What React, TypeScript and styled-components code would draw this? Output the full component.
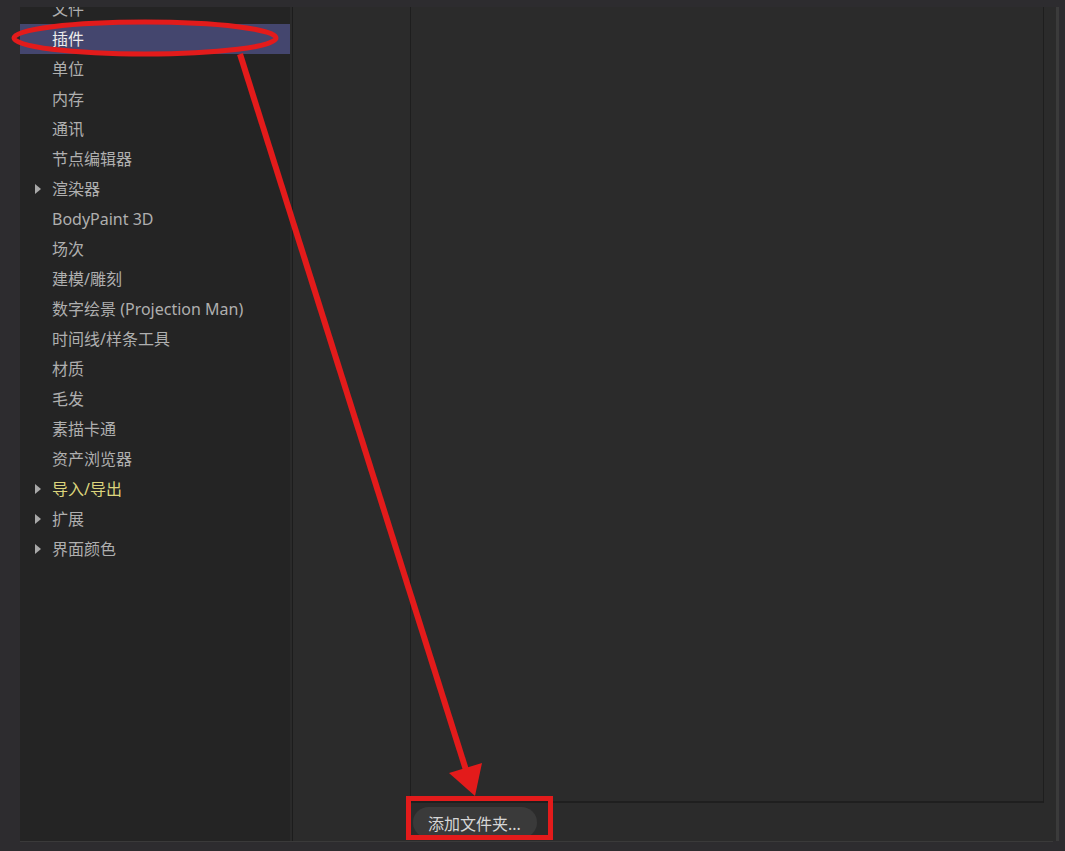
import styled, { createGlobalStyle } from 'styled-components';

const GlobalStyle = createGlobalStyle`
  html, body {
    margin: 0;
    padding: 0;
    background: #2d2c2f;
    overflow: hidden;
  }
  * {
    box-sizing: border-box;
  }
`;

const Page = styled.div`
  position: relative;
  width: 1065px;
  height: 851px;
  padding: 7px 0 0 20px;
  background: #2d2c2f;
  font-family: 'Noto Sans', 'Noto Sans CJK SC', sans-serif;
  display: flex;
  flex-direction: column;
`;

const Window = styled.div`
  display: flex;
  height: 834px;
`;

const Sidebar = styled.nav`
  width: 270px;
  background: #242424;
  overflow: hidden;
`;

const List = styled.ul`
  list-style: none;
  margin: -13px 0 0;
  padding: 0;
`;

interface RowProps {
  selected?: boolean;
  highlight?: boolean;
}

const Row = styled.li<RowProps>`
  position: relative;
  height: 30px;
  line-height: 30px;
  padding-left: 32px;
  font-size: 16px;
  white-space: nowrap;
  background: ${p => (p.selected ? '#44466e' : 'transparent')};
  color: ${p => (p.selected ? '#ececec' : p.highlight ? '#dcd47c' : '#afafaf')};
`;

const Caret = styled.span`
  position: absolute;
  left: 15px;
  top: 10px;
  width: 0;
  height: 0;
  border-left: 6px solid #a9a9a9;
  border-top: 5px solid transparent;
  border-bottom: 5px solid transparent;
`;

const Splitter = styled.div`
  width: 2px;
  background: #2a2a2a;
`;

const Main = styled.section`
  width: 764px;
  background: #2b2b2b;
  border-left: 1px solid #1c1c1c;
  display: flex;
  flex-direction: column;
`;

const PaneRow = styled.div`
  flex: 1;
  display: flex;
  padding: 0 12px 0 117px;
`;

const Pane = styled.div`
  flex: 1;
  border-left: 1px solid #1e1e1e;
  border-right: 1px solid #1e1e1e;
  border-bottom: 2px solid #1f1f1f;
`;

const Footer = styled.div`
  height: 38px;
  padding: 4px 0 0 120px;
`;

const Button = styled.button`
  height: 31px;
  width: 124px;
  border: none;
  border-radius: 16px;
  background: #3a3a3a;
  color: #d6d6d6;
  font-family: 'Noto Sans', 'Noto Sans CJK SC', sans-serif;
  font-size: 16px;
  text-align: left;
  padding: 0 0 0 15px;
`;

const ScrollStrip = styled.div`
  width: 3px;
  background: #3b3b3b;
`;

const BottomLine = styled.div`
  width: 1033px;
  height: 1px;
  background: #3a3a3a;
`;

const Overlay = styled.svg`
  position: absolute;
  left: 0;
  top: 0;
  pointer-events: none;
`;

const items: { label: string; caret?: boolean; selected?: boolean; highlight?: boolean }[] = [
  { label: '文件' },
  { label: '插件', selected: true },
  { label: '单位' },
  { label: '内存' },
  { label: '通讯' },
  { label: '节点编辑器' },
  { label: '渲染器', caret: true },
  { label: 'BodyPaint 3D' },
  { label: '场次' },
  { label: '建模/雕刻' },
  { label: '数字绘景 (Projection Man)' },
  { label: '时间线/样条工具' },
  { label: '材质' },
  { label: '毛发' },
  { label: '素描卡通' },
  { label: '资产浏览器' },
  { label: '导入/导出', caret: true, highlight: true },
  { label: '扩展', caret: true },
  { label: '界面颜色', caret: true }
];

const App = () => {
  return (
    <Page>
      <GlobalStyle />
      <Window>
        <Sidebar>
          <List>
            {items.map(item => (
              <Row key={item.label} selected={item.selected} highlight={item.highlight}>
                {item.caret && <Caret />}
                {item.label}
              </Row>
            ))}
          </List>
        </Sidebar>
        <Splitter />
        <Main>
          <PaneRow>
            <Pane />
          </PaneRow>
          <Footer>
            <Button>添加文件夹...</Button>
          </Footer>
        </Main>
        <ScrollStrip />
      </Window>
      <BottomLine />
      <Overlay width="1065" height="851" viewBox="0 0 1065 851">
        <ellipse cx="145" cy="38" rx="131" ry="16" fill="none" stroke="#e31b1b" strokeWidth="5" />
        <line x1="240" y1="54" x2="466" y2="770" stroke="#e31b1b" strokeWidth="6" />
        <polygon points="449,773 482,763 475,796" fill="#e31b1b" />
        <rect x="408.5" y="798.5" width="142" height="39" fill="none" stroke="#e31b1b" strokeWidth="5" />
      </Overlay>
    </Page>
  );
};

export default App;
